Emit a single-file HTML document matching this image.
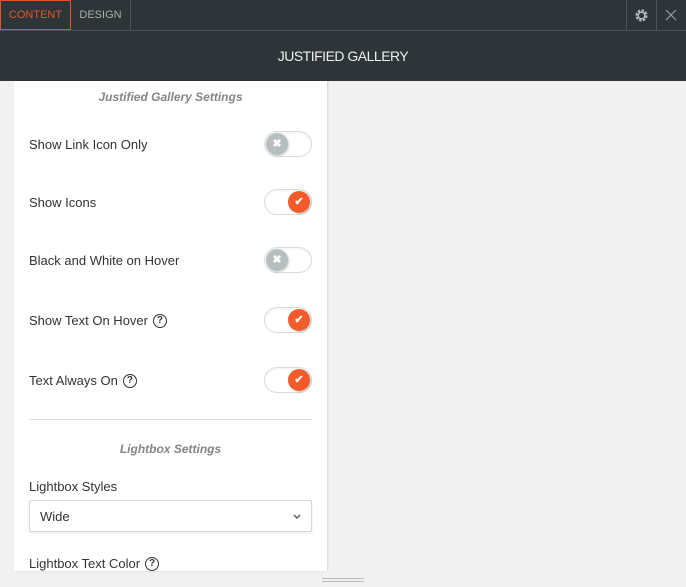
<html><head><style>
body{margin:0;width:686px;height:587px;background:#f1f1f1;font-family:"Liberation Sans",sans-serif;position:relative;overflow:hidden}
.top{position:absolute;left:0;top:0;width:686px;height:30px;background:#2e3538;border-bottom:1px solid #474f52}
.tab{position:absolute;top:0;height:30px;line-height:31px;font-size:11px;color:#a9aeb0;text-align:center}
.hdr{position:absolute;left:0;top:31px;width:686px;height:50px;background:#2e3538;color:#eee;font-size:14px;text-align:center;line-height:50px;letter-spacing:-.5px}
.panel{position:absolute;left:14px;top:81px;width:313px;height:490px;background:#fff;box-shadow:1px 0 2px rgba(0,0,0,.12)}
.lab{position:absolute;left:29px;font-size:13px;color:#333;line-height:16px}
.sec{position:absolute;left:14px;width:313px;text-align:center;font-size:12px;font-weight:bold;font-style:italic;color:#858585}
.tg{position:absolute;left:264px;width:46px;height:24px;border:1px solid #dcdcdc;border-radius:13px;background:#fff;box-shadow:inset 0 1px 2px rgba(0,0,0,.06)}
.k{position:absolute;top:1px;width:22px;height:22px;border-radius:50%;color:#fff;font-size:11px;text-align:center;line-height:22px;font-weight:bold;box-shadow:1px 1px 2px rgba(0,0,0,.2)}
.off .k{left:1px;background:#b7bebf}
.on .k{right:1px;background:#f35b2a}
.q{display:inline-block;width:12px;height:12px;border:1.5px solid #333;border-radius:50%;font-size:10px;line-height:12px;text-align:center;font-weight:bold;margin-left:5px;vertical-align:top;margin-top:1px}
</style></head><body>
<div class="top">
<div class="tab" style="left:0;width:69px;border:1px solid #e2562a;height:28px;line-height:29px;color:#e2562a">CONTENT</div>
<div class="tab" style="left:71px;width:59px;border-right:1px solid #4e5659">DESIGN</div>
<div style="position:absolute;left:626px;top:0;width:1px;height:30px;background:#4e5659"></div>
<div style="position:absolute;left:656px;top:0;width:1px;height:30px;background:#4e5659"></div>
<svg style="position:absolute;left:634px;top:8px" width="15" height="15" viewBox="0 0 16 16"><circle cx="8" cy="8" r="5" fill="none" stroke="#b5babc" stroke-width="3" stroke-dasharray="2.5 1.4"/><circle cx="8" cy="8" r="3.5" fill="none" stroke="#b5babc" stroke-width="1.5"/></svg>
<svg style="position:absolute;left:665px;top:9px" width="12" height="12"><path d="M1 1L11 11M11 1L1 11" stroke="#9aa0a2" stroke-width="1.2"/></svg>
</div>
<div class="hdr">JUSTIFIED GALLERY</div>
<div class="panel"></div>
<div class="sec" style="top:90px">Justified Gallery Settings</div>
<div class="lab" style="top:137px">Show Link Icon Only</div>
<div class="tg off" style="top:131px"><div class="k">✖</div></div>
<div class="lab" style="top:195px">Show Icons</div>
<div class="tg on" style="top:189px"><div class="k">✔</div></div>
<div class="lab" style="top:253px">Black and White on Hover</div>
<div class="tg off" style="top:247px"><div class="k">✖</div></div>
<div class="lab" style="top:313px">Show Text On Hover<span class="q">?</span></div>
<div class="tg on" style="top:307px"><div class="k">✔</div></div>
<div class="lab" style="top:373px">Text Always On<span class="q">?</span></div>
<div class="tg on" style="top:367px"><div class="k">✔</div></div>
<div style="position:absolute;left:29px;top:419px;width:283px;height:1px;background:#ddd"></div>
<div class="sec" style="top:442px">Lightbox Settings</div>
<div class="lab" style="top:479px">Lightbox Styles</div>
<div style="position:absolute;left:29px;top:500px;width:281px;height:30px;border:1px solid #d5d5d5;border-radius:2px;box-shadow:0 1px 2px rgba(0,0,0,.08);font-size:13px;color:#333;line-height:31px;text-indent:10px">Wide<svg style="position:absolute;right:10px;top:13px" width="8" height="6"><path d="M1 1L4 4L7 1" fill="none" stroke="#555" stroke-width="1.4"/></svg></div>
<div class="lab" style="top:556px">Lightbox Text Color<span class="q">?</span></div>
<div style="position:absolute;left:322px;top:578px;width:42px;height:1px;background:#bbb"></div>
<div style="position:absolute;left:322px;top:581px;width:42px;height:1px;background:#bbb"></div>
</body></html>
